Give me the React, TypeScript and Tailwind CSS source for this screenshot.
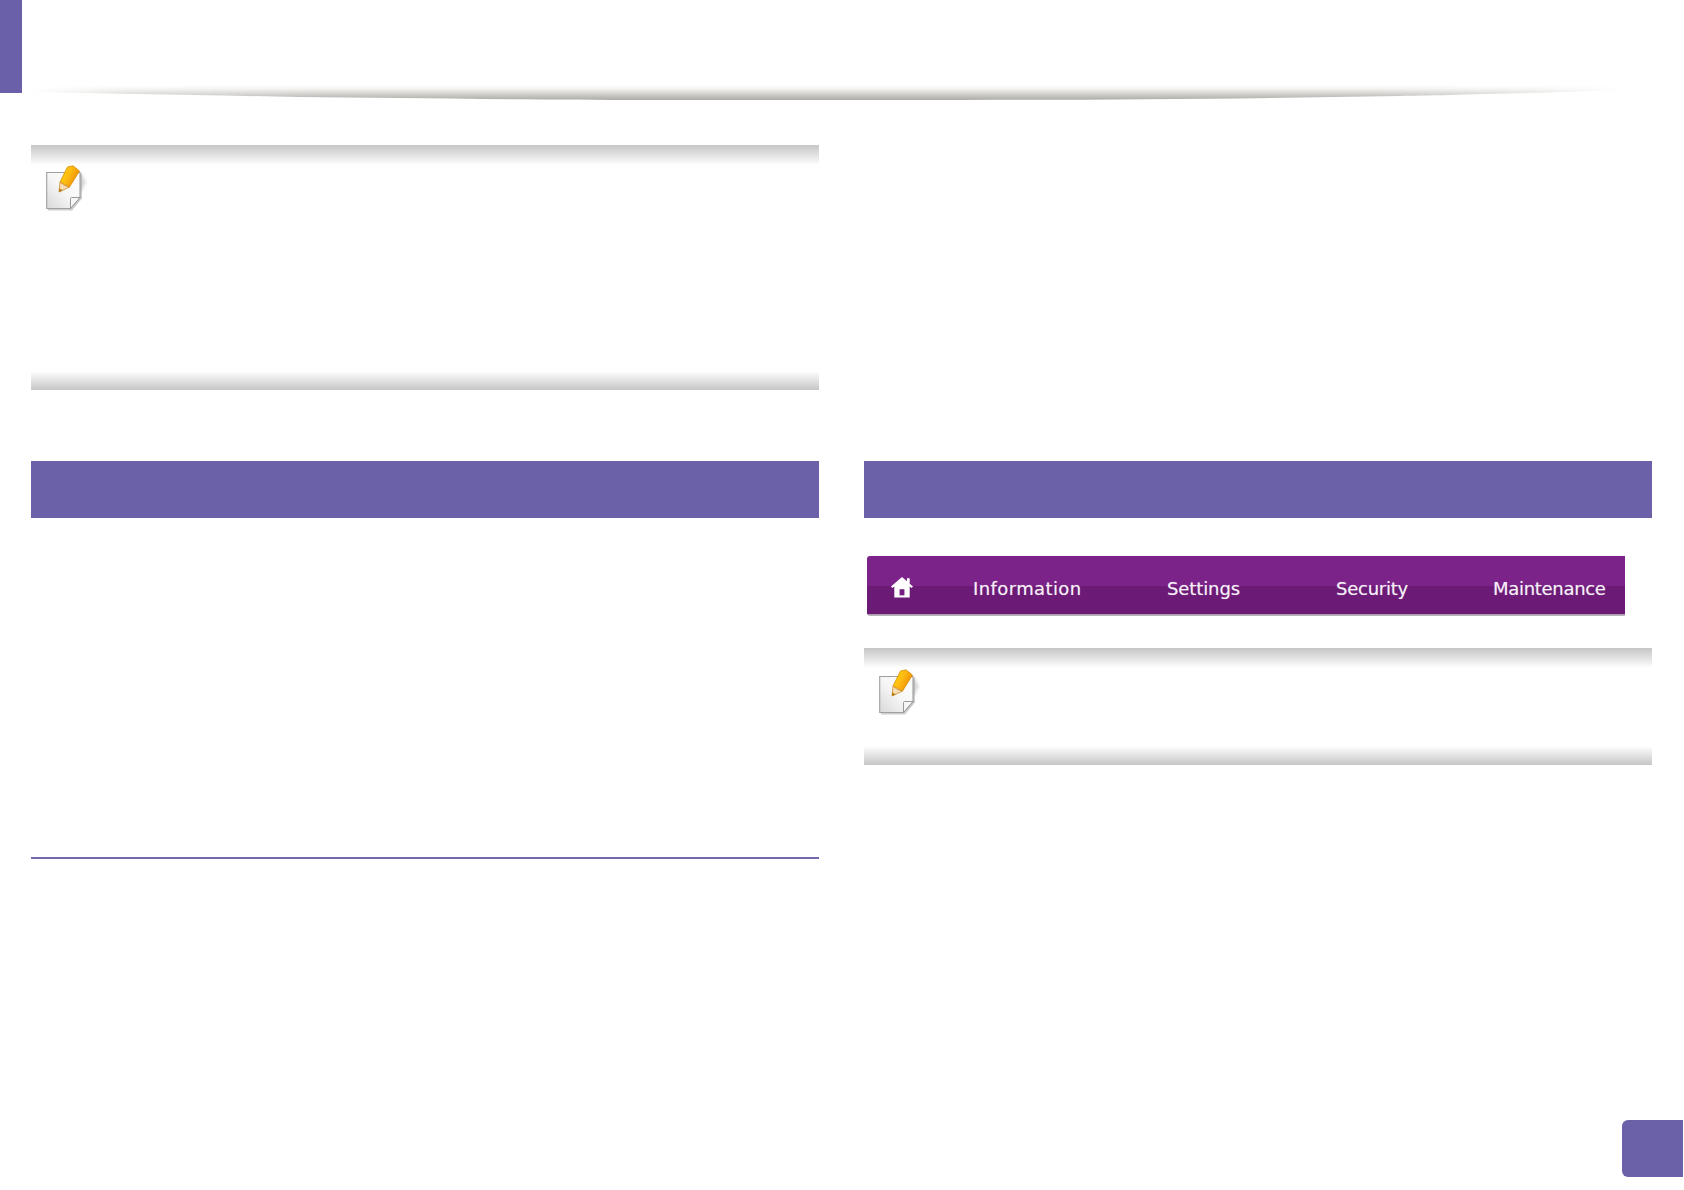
function NoteIcon() {
  return (
    <svg width="42" height="46" viewBox="0 0 42 46" className="block">
      <defs>
        <linearGradient id="sheet" x1="1" y1="0" x2="0" y2="1">
          <stop offset="0" stopColor="#ffffff" />
          <stop offset="0.5" stopColor="#f6f6f6" />
          <stop offset="1" stopColor="#d8d8d8" />
        </linearGradient>
        <linearGradient id="pencil" x1="0" y1="0" x2="1" y2="0.5">
          <stop offset="0" stopColor="#ffe000" />
          <stop offset="0.55" stopColor="#fdb913" />
          <stop offset="1" stopColor="#ee8b00" />
        </linearGradient>
        <filter id="soft">
          <feGaussianBlur stdDeviation="1.8" />
        </filter>
      </defs>
      <path d="M22 14 L35 8 L40 17 L35 27 L22 28 Z" fill="#cfcfcf" opacity="0.8" filter="url(#soft)" />
      <path d="M1 8 H35 V33 L25 45 H1 Z" fill="#9e9e9e" opacity="0.5" transform="translate(1 0.6)" />
      <path d="M0.7 7.5 H34 V32.5 L24.5 43.5 H0.7 Z" fill="url(#sheet)" stroke="#a0a0a0" strokeWidth="1.1" />
      <path d="M34 32.5 L24.5 43.5 V33.5 Q24.5 32.5 25.5 32.5 Z" fill="#f6f6f6" stroke="#989898" strokeWidth="1" />
      <path d="M14 17 L21.5 2 L27 0.8 L33.5 6 L23.5 22 Z" fill="url(#pencil)" stroke="#d98a00" strokeWidth="0.8" />
      <path d="M13 27 L14 17 Q18 21.5 23.5 22 Z" fill="#f8ddb4" stroke="#c98a2a" strokeWidth="0.8" />
      <path d="M13 27 L13.3 23.2 L16.8 25.6 Z" fill="#b87a10" />
    </svg>
  );
}

function Note({ className, iconTop }: { className: string; iconTop: string }) {
  return (
    <div className={`relative bg-white ${className}`}>
      <div className="flex h-full flex-col justify-between">
        <div className="h-[20px] bg-gradient-to-b from-[#c6c6c6] to-white" />
        <div className="h-[19px] bg-gradient-to-b from-white to-[#c6c6c6]" />
      </div>
      <div className={`absolute left-[15px] ${iconTop}`}>
        <NoteIcon />
      </div>
    </div>
  );
}

function SectionHeader() {
  return <div className="h-[57px] bg-[#6a61a8]" />;
}

function MenuBar() {
  return (
    <div className="ml-[3px] mt-[38px] h-[60px] w-[758px] overflow-hidden rounded-l-[3px] bg-[linear-gradient(to_bottom,#7b2389_0,#7b2389_30px,#6b1a76_30px,#6b1a76_58px,#9c90a0_58px,#c4bfc6_60px)]">
      <div className="flex h-[58px] items-center whitespace-nowrap pt-[7px] font-['DejaVu_Sans',sans-serif] text-[18px] text-[#f6eff7] [text-shadow:0_0_1px_rgba(255,255,255,0.45)]">
        <svg width="22" height="22" viewBox="0 0 20 20" className="ml-[24px] -mt-[4px] shrink-0 fill-white">
          <path d="M10 1 L14.5 4.8 V2 H17 V7 L20 9.6 L18.8 11 L17 9.6 V19.5 H3 V9.6 L1.2 11 L0 9.6 Z" />
          <rect x="7.8" y="12" width="4.4" height="5.6" fill="#741f80" />
        </svg>
        <span className="ml-[60px] w-[108px] shrink-0 tracking-[0.4px]">Information</span>
        <span className="ml-[86px] w-[73px] shrink-0 tracking-[-0.1px]">Settings</span>
        <span className="ml-[96px] w-[71px] shrink-0 tracking-[-0.25px]">Security</span>
        <span className="ml-[86px] w-[113px] shrink-0 tracking-[-0.3px]">Maintenance</span>
      </div>
    </div>
  );
}

export default function App() {
  return (
    <div className="flex h-[1190px] w-[1684px] flex-col overflow-hidden bg-white">
      <div className="flex h-[100px] shrink-0 items-start">
        <div className="h-[93px] w-[22px] shrink-0 bg-[#6a60a9]" />
        <svg width="1606" height="19" viewBox="0 0 1606 19" className="ml-[8px] mt-[82px] shrink-0">
          <defs>
            <linearGradient id="swooshFill" x1="0" y1="0" x2="0" y2="1">
              <stop offset="0" stopColor="#ffffff" />
              <stop offset="0.25" stopColor="#f3f3f1" />
              <stop offset="1" stopColor="#adaaa5" />
            </linearGradient>
            <linearGradient id="swooshFade">
              <stop offset="0" stopColor="#000" />
              <stop offset="0.06" stopColor="#bbb" />
              <stop offset="0.18" stopColor="#fff" />
              <stop offset="0.84" stopColor="#fff" />
              <stop offset="0.94" stopColor="#999" />
              <stop offset="1" stopColor="#000" />
            </linearGradient>
            <mask id="swooshMask">
              <rect width="1606" height="19" fill="url(#swooshFade)" />
            </mask>
          </defs>
          <path
            d="M0 3 H1606 L1585 8 C1500 11.5 1400 13.5 1370 14 C1200 17 1050 18 870 18 L620 18 C480 17.5 370 16 270 15 C170 13 80 11.5 0 10 Z"
            fill="url(#swooshFill)"
            mask="url(#swooshMask)"
          />
        </svg>
      </div>

      <div className="ml-[31px] mt-[45px] grid w-[1621px] shrink-0 grid-cols-[788px_788px] gap-x-[45px] gap-y-[71px]">
        <Note className="h-[245px]" iconTop="top-[20px]" />
        <div />
        <div>
          <SectionHeader />
          <div className="mt-[339px] h-[2px] bg-[#7069ae]" />
        </div>
        <div>
          <SectionHeader />
          <MenuBar />
          <Note className="mt-[32px] h-[117px]" iconTop="top-[21px]" />
        </div>
      </div>

      <div className="mt-[261px] flex shrink-0 justify-end pr-px">
        <div className="h-[57px] w-[61px] rounded-l-[6px] bg-[#6a61a8]" />
      </div>
    </div>
  );
}
